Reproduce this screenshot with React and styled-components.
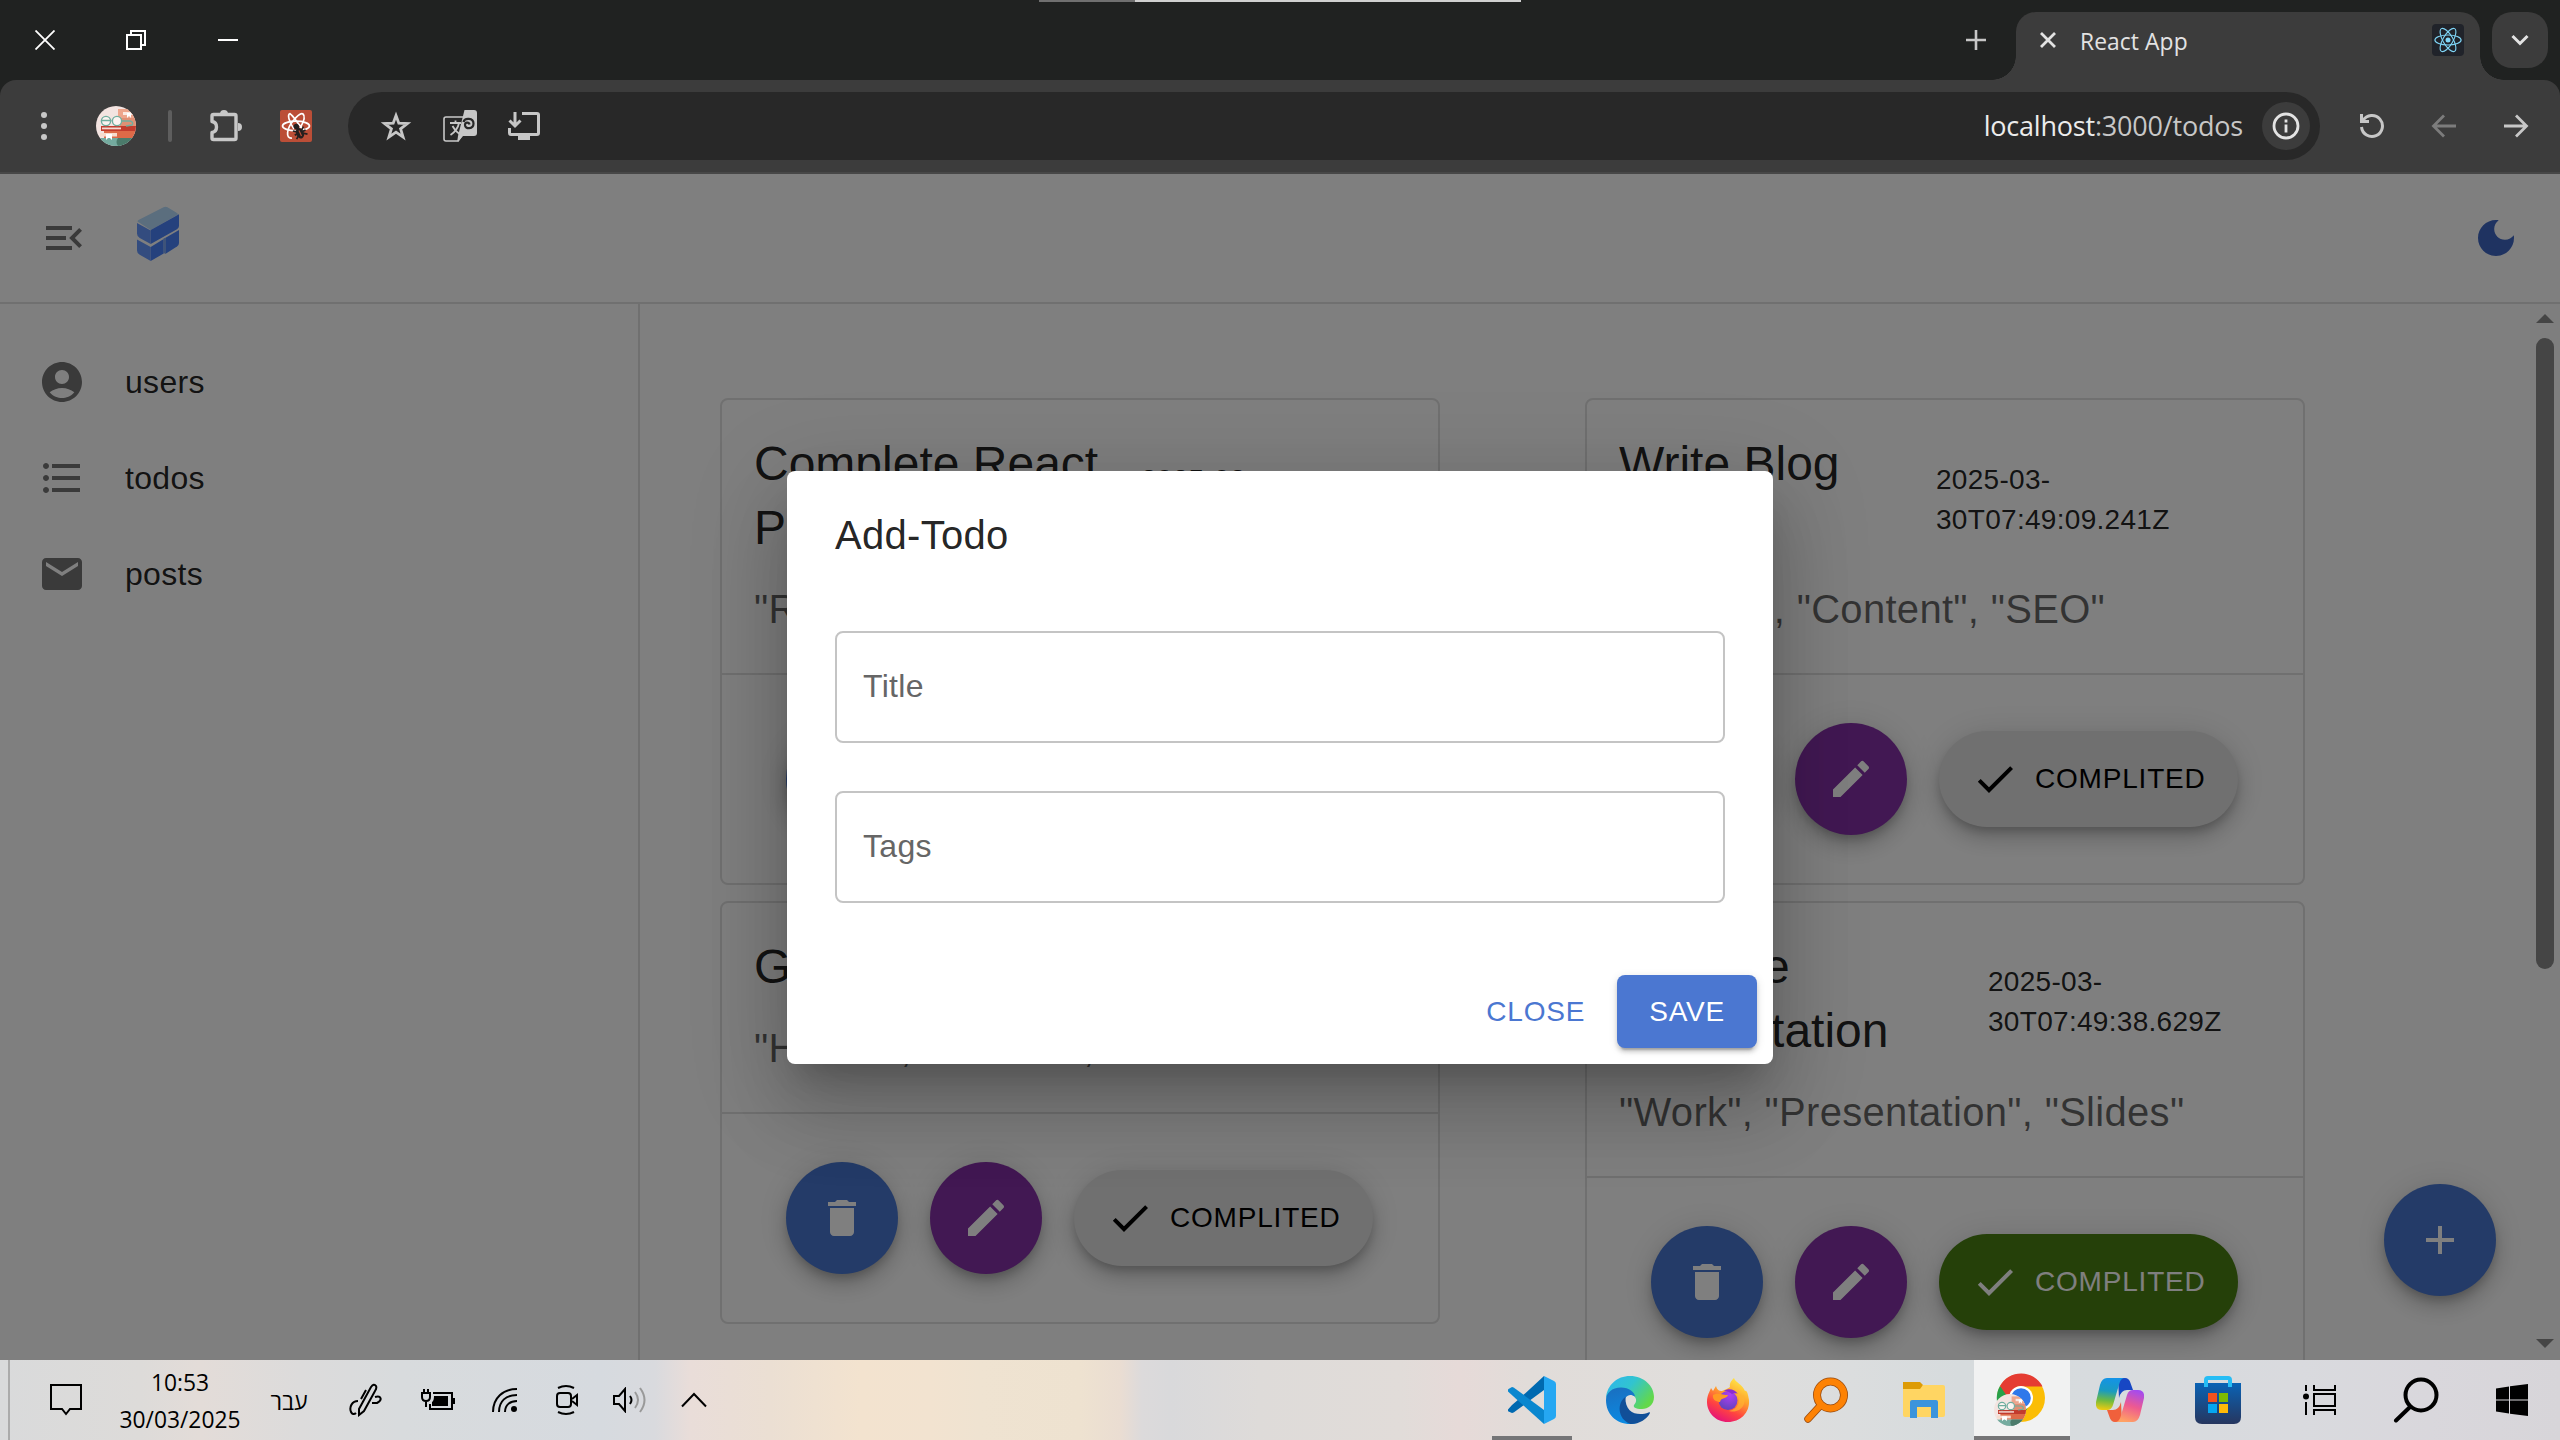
import React from "react";
import styled, { createGlobalStyle } from "styled-components";

const GlobalStyle = createGlobalStyle`
  * { box-sizing: border-box; }
  html, body { margin: 0; padding: 0; }
  body {
    width: 2560px;
    height: 1440px;
    overflow: hidden;
    font-family: "Liberation Sans", Arial, sans-serif;
    background: #202221;
  }
  svg { display: block; flex: none; }
`;

const ui = `"Open Sans", "Noto Sans", "DejaVu Sans", sans-serif`;

/* ---------- shell ---------- */
const Screen = styled.div`
  display: flex;
  flex-direction: column;
  width: 2560px;
  height: 1440px;
  position: relative;
`;

const Slot = styled.div`
  width: ${(p) => p.$w}px;
  height: 100%;
  flex: none;
  display: flex;
  align-items: center;
  justify-content: center;
  margin-left: ${(p) => p.$ml || 0}px;
`;

/* ---------- tab strip ---------- */
const TabStrip = styled.div`
  height: 80px;
  flex: none;
  display: flex;
  align-items: flex-start;
  background: #202221;
  color: #fff;
`;
const LoadLine = styled.div`
  position: absolute;
  top: 0;
  left: 1039px;
  width: 482px;
  height: 2px;
  background: linear-gradient(90deg, #707070 0 96px, #d0d0d0 96px);
`;
const Spacer = styled.div`
  flex: 1;
`;
const Tab = styled.div`
  position: relative;
  width: 464px;
  height: 68px;
  margin-top: 12px;
  padding: 0 16px 0 24px;
  display: flex;
  align-items: center;
  background: #3c3c3c;
  border-radius: 20px 20px 0 0;
  &::before,
  &::after {
    content: "";
    position: absolute;
    bottom: 0;
    width: 24px;
    height: 24px;
  }
  &::before {
    left: -24px;
    background: radial-gradient(circle at 0 0, transparent 23.5px, #3c3c3c 24px);
  }
  &::after {
    right: -24px;
    background: radial-gradient(circle at 100% 0, transparent 23.5px, #3c3c3c 24px);
  }
`;
const TabTitle = styled.span`
  flex: 1;
  margin-left: 24px;
  padding-bottom: 8px;
  font: 400 22.8px/32px ${ui};
  letter-spacing: 0.1px;
  color: #e3e3e3;
`;
const TabIcon = styled.div`
  margin-bottom: 12px;
`;
const TabMenu = styled.div`
  width: 56px;
  height: 56px;
  margin: 12px 12px 0 12px;
  border-radius: 20px;
  background: #3c3c3c;
  display: flex;
  align-items: center;
  justify-content: center;
`;

/* ---------- toolbar ---------- */
const Toolbar = styled.div`
  height: 94px;
  flex: none;
  display: flex;
  align-items: center;
  padding-right: 8px;
  background: #3c3c3c;
  border-bottom: 2px solid #474747;
  border-radius: 16px 16px 0 0;
`;
const Divider = styled.div`
  width: 4px;
  height: 32px;
  margin-left: 24px;
  border-radius: 2px;
  background: #5e5e5e;
`;
const Omnibox = styled.div`
  flex: 1;
  height: 68px;
  margin-left: 18px;
  padding: 0 10px 0 16px;
  display: flex;
  align-items: center;
  border-radius: 34px;
  background: #282828;
`;
const Url = styled.span`
  font: 400 27px/40px ${ui};
  letter-spacing: -0.2px;
  color: #c7c7c7;
  b {
    font-weight: 400;
    color: #ececec;
  }
`;
const InfoChip = styled.div`
  width: 48px;
  height: 48px;
  margin-left: 19px;
  border-radius: 50%;
  background: #3c3c3c;
  display: flex;
  align-items: center;
  justify-content: center;
`;

/* ---------- web page ---------- */
const Page = styled.div`
  position: relative;
  height: 1186px;
  flex: none;
  display: flex;
  flex-direction: column;
  overflow: hidden;
  background: #fff;
  color: rgba(0, 0, 0, 0.87);
`;
const Header = styled.header`
  height: 130px;
  flex: none;
  display: flex;
  align-items: center;
  padding: 0 40px;
  border-bottom: 2px solid #e0e0e0;
`;
const Logo = styled.svg`
  margin: 0 0 8px 48px;
`;
const Body = styled.div`
  flex: 1;
  min-height: 0;
  display: flex;
`;
const Sidebar = styled.nav`
  width: 640px;
  flex: none;
  padding-top: 30px;
  border-right: 2px solid #e0e0e0;
`;
const NavItem = styled.a`
  height: 96px;
  padding-left: 38px;
  display: flex;
  align-items: center;
  gap: 39px;
  font-size: 32px;
  letter-spacing: 0.3px;
  color: rgba(0, 0, 0, 0.87);
`;
const Main = styled.main`
  flex: 1;
  padding: 94px 0 0 80px;
  display: grid;
  grid-template-columns: 720px 720px;
  column-gap: 145px;
  row-gap: 16px;
  align-items: start;
  align-content: start;
`;
const Card = styled.article`
  border: 2px solid #e0e0e0;
  border-radius: 8px;
`;
const CardBody = styled.div`
  padding: 32px;
  border-bottom: 2px solid #e0e0e0;
`;
const CardHead = styled.div`
  display: grid;
  grid-template-columns: ${(p) => p.$titleWidth}px 1fr;
  align-items: start;
  margin-bottom: 16.8px;
`;
const CardTitle = styled.h5`
  margin: 0;
  font-weight: 400;
  font-size: 48px;
  line-height: 64px;
  white-space: pre-line;
`;
const CardDate = styled.p`
  margin: 27.5px 0 0;
  height: 0;
  font-size: 28px;
  line-height: 40px;
  letter-spacing: 0.3px;
  white-space: pre-line;
`;
const Tags = styled.h6`
  margin: 0;
  font-weight: 400;
  font-size: 40px;
  line-height: 64px;
  letter-spacing: 0.3px;
  color: rgba(0, 0, 0, 0.6);
`;
const CardActions = styled.div`
  padding: 48px 0 48px 64px;
  display: flex;
  align-items: center;
  gap: 32px;
`;
const fabShadow = `0 6px 10px -2px rgba(0,0,0,.2), 0 12px 20px 0 rgba(0,0,0,.14), 0 2px 36px 0 rgba(0,0,0,.12)`;
const Fab = styled.button`
  width: 112px;
  height: 112px;
  padding: 0;
  border: 0;
  border-radius: 50%;
  display: flex;
  align-items: center;
  justify-content: center;
  background: ${(p) => p.$bg};
  color: #fff;
  box-shadow: ${fabShadow};
`;
const AddFab = styled(Fab)`
  position: absolute;
  right: 64px;
  bottom: 64px;
`;
const Pill = styled.button`
  height: 96px;
  width: 299px;
  padding: 0 0 0 32px;
  border: 0;
  border-radius: 48px;
  display: flex;
  align-items: center;
  gap: 16px;
  font: 400 28px "Liberation Sans", Arial, sans-serif;
  letter-spacing: 0.8px;
  background: ${(p) => (p.$done ? "#4a8012" : "#e0e0e0")};
  color: ${(p) => (p.$done ? "#fff" : "#000")};
  box-shadow: ${fabShadow};
`;
const ScrollTrack = styled.div`
  width: 30px;
  flex: none;
  padding: 10px 0 12px;
  display: flex;
  flex-direction: column;
  align-items: center;
  background: #fdfdfd;
`;
const ScrollThumb = styled.div`
  width: 18px;
  height: 631px;
  margin: 15px 0 auto;
  border-radius: 9px;
  background: #8b8b8b;
`;

/* ---------- dialog ---------- */
const Backdrop = styled.div`
  position: absolute;
  inset: 0;
  display: flex;
  align-items: center;
  justify-content: center;
  background: rgba(0, 0, 0, 0.5);
`;
const Dialog = styled.section`
  width: 986px;
  height: 593px;
  margin-top: 1px;
  display: flex;
  flex-direction: column;
  border-radius: 8px;
  background: #fff;
  box-shadow: 0 22px 30px -14px rgba(0, 0, 0, 0.2), 0 48px 76px 6px rgba(0, 0, 0, 0.14),
    0 18px 92px 16px rgba(0, 0, 0, 0.12);
`;
const DialogTitle = styled.h2`
  margin: 0;
  padding: 32px 48px;
  font-weight: 400;
  font-size: 40px;
  line-height: 64px;
  letter-spacing: 0.3px;
`;
const Fields = styled.div`
  flex: 1;
  padding: 32px 48px;
  display: flex;
  flex-direction: column;
  gap: 48px;
`;
const Field = styled.label`
  height: 112px;
  padding: 0 0 2px 26px;
  display: flex;
  align-items: center;
  border: 2px solid #c4c4c4;
  border-radius: 8px;
  font-size: 32px;
  letter-spacing: 0.3px;
  color: #666;
`;
const DialogActions = styled.div`
  padding: 16px;
  display: flex;
  justify-content: flex-end;
  gap: 16px;
`;
const Button = styled.button`
  height: 73px;
  padding: 0 ${(p) => (p.$filled ? 32 : 16)}px;
  border: 0;
  border-radius: 8px;
  font: 400 28px "Liberation Sans", Arial, sans-serif;
  letter-spacing: 0.8px;
  background: ${(p) => (p.$filled ? "#4b77d1" : "transparent")};
  color: ${(p) => (p.$filled ? "#fff" : "#4b77d1")};
  box-shadow: ${(p) =>
    p.$filled
      ? "0 6px 2px -4px rgba(0,0,0,.2), 0 4px 4px 0 rgba(0,0,0,.14), 0 2px 10px 0 rgba(0,0,0,.12)"
      : "none"};
`;

/* ---------- taskbar ---------- */
const Taskbar = styled.footer`
  height: 80px;
  flex: none;
  display: flex;
  align-items: center;
  color: #000;
  background: linear-gradient(
    90deg,
    #d9dadb 0,
    #dddbd9 140px,
    #e3dcd8 200px,
    #dcdbdb 300px,
    #d8dbdd 400px,
    #d6dadf 600px,
    #d9dade 655px,
    #e9ddd9 690px,
    #ebdfd3 770px,
    #f3e3cf 860px,
    #f2e3d0 930px,
    #efe3d1 980px,
    #eee2d0 1080px,
    #eaddd2 1120px,
    #dcdadb 1142px,
    #d9d9db 1170px,
    #dedbd9 1260px,
    #e1dcd9 1400px,
    #e6dad8 1460px,
    #e1dcd9 1530px,
    #e0dedc 1700px,
    #dbddde 1850px,
    #d6dbdd 1960px,
    #d7dbde 2100px,
    #d9dade 2300px,
    #d9d7dc 2430px,
    #d7d5d9 2560px
  );
`;
const DesktopEdge = styled.div`
  width: 10px;
  height: 80px;
  flex: none;
  border-right: 2px solid #ababab;
`;
const Clock = styled.div`
  text-align: center;
  font: 400 22.8px/37px ${ui};
  padding-top: 1px;
`;
const Lang = styled.span`
  font: 400 23px/32px ${ui};
  padding: 1px 1px 0 0;
`;
const TaskApp = styled.div`
  position: relative;
  width: 96px;
  height: 80px;
  margin-right: ${(p) => p.$gap ?? 2}px;
  display: flex;
  align-items: center;
  justify-content: center;
  background: ${(p) => (p.$active ? "#f1f2f2" : "transparent")};
  &::after {
    content: "";
    display: ${(p) => (p.$running ? "block" : "none")};
    position: absolute;
    left: ${(p) => (p.$active ? 0 : 8)}px;
    right: ${(p) => (p.$active ? 0 : 8)}px;
    bottom: 0;
    height: 4px;
    background: #757577;
  }
`;

/* ---------- icons ---------- */
const Mui = ({ d, size = 48, color = "currentColor" }) => (
  <svg width={size} height={size} viewBox="0 0 24 24" fill={color}>
    <path d={d} />
  </svg>
);
const P = {
  menuOpen: "M3 18h13v-2H3zm0-5h10v-2H3zm0-7v2h13V6zm18 9.59L17.42 12 21 8.41 19.59 7l-5 5 5 5z",
  moon: "M12 3c-4.97 0-9 4.03-9 9s4.03 9 9 9 9-4.03 9-9c0-.46-.04-.92-.1-1.36-.98 1.37-2.58 2.26-4.4 2.26-2.98 0-5.4-2.42-5.4-5.4 0-1.81.89-3.42 2.26-4.4-.44-.06-.9-.1-1.36-.1",
  user: "M12 2C6.48 2 2 6.48 2 12s4.48 10 10 10 10-4.48 10-10S17.52 2 12 2m0 4c1.93 0 3.5 1.57 3.5 3.5S13.93 13 12 13s-3.5-1.57-3.5-3.5S10.07 6 12 6m0 14c-2.03 0-4.43-.82-6.14-2.88C7.55 15.8 9.68 15 12 15s4.45.8 6.14 2.12C16.43 19.18 14.03 20 12 20",
  list: "M4 10.5c-.83 0-1.5.67-1.5 1.5s.67 1.5 1.5 1.5 1.5-.67 1.5-1.5-.67-1.5-1.5-1.5m0-6c-.83 0-1.5.67-1.5 1.5S3.17 7.5 4 7.5 5.5 6.83 5.5 6 4.83 4.5 4 4.5m0 12c-.83 0-1.5.68-1.5 1.5s.68 1.5 1.5 1.5 1.5-.68 1.5-1.5-.67-1.5-1.5-1.5M7 19h14v-2H7zm0-6h14v-2H7zm0-8v2h14V5z",
  mail: "M20 4H4c-1.1 0-1.99.9-1.99 2L2 18c0 1.1.9 2 2 2h16c1.1 0 2-.9 2-2V6c0-1.1-.9-2-2-2m0 4-8 5-8-5V6l8 5 8-5z",
  trash: "M6 19c0 1.1.9 2 2 2h8c1.1 0 2-.9 2-2V7H6zM19 4h-3.5l-1-1h-5l-1 1H5v2h14z",
  edit: "M3 17.25V21h3.75L17.81 9.94l-3.75-3.75zM20.71 7.04c.39-.39.39-1.02 0-1.41l-2.34-2.34a.996.996 0 0 0-1.41 0l-1.83 1.83 3.75 3.75z",
  check: "M9 16.17 4.83 12l-1.42 1.41L9 19 21 7l-1.41-1.41z",
  add: "M19 13h-6v6h-2v-6H5v-2h6V5h2v6h6z",
};

const Line = ({ w, h = w, sw = 2, color = "#fff", children }) => (
  <svg width={w} height={h} viewBox={`0 0 ${w} ${h}`} fill="none" stroke={color} strokeWidth={sw}>
    {children}
  </svg>
);

const AvatarArt = ({ size }) => (
  <svg width={size} height={size} viewBox="0 0 40 40">
    <defs>
      <clipPath id={`av${size}`}>
        <circle cx="20" cy="20" r="20" />
      </clipPath>
    </defs>
    <g clipPath={`url(#av${size})`}>
      <rect width="40" height="40" fill="#f3e4e1" />
      <rect x="22" y="3" width="18" height="9" fill="#eda58c" />
      <rect x="27" y="6" width="13" height="3" fill="#fbe9e2" />
      <path d="M31 7h4v5l-2-2-2 2z" fill="#fff" />
      <rect x="24" y="12" width="16" height="9" fill="#e08f74" />
      <rect x="5" y="20" width="35" height="5" fill="#c23b2d" />
      <rect x="6" y="21.500" width="19" height="1.800" fill="#f3d9d2" />
      <rect x="8" y="25" width="32" height="7" fill="#dd6a48" />
      <rect x="4" y="27" width="17" height="3.500" fill="#f7dccd" />
      <path d="M10 28h6v7l-3-3-3 3z" fill="#fff" />
      <rect x="0" y="32" width="40" height="8" fill="#74ab9f" />
      <path d="M22 32h18v8H22q-3-4 0-8" fill="#4b7b6b" />
      <path d="M10 28h6v6l-3-3-3 3z" fill="#fff" />
      <g fill="#fbf3f0" stroke="#6fae9f" strokeWidth="1.400">
        <circle cx="10" cy="15" r="4.600" />
        <circle cx="21" cy="15" r="4.600" />
        <path d="M5.500 14.500h10M26 15h8q4 1 2 4l-6 1" fill="none" />
      </g>
    </g>
  </svg>
);

const Atom = ({ size, color, sw, r = 2 }) => (
  <svg width={size} height={size} viewBox="-12 -12 24 24" fill="none" stroke={color} strokeWidth={sw}>
    <circle r={r} fill={color} stroke="none" />
    <ellipse rx="10.500" ry="4" />
    <ellipse rx="10.500" ry="4" transform="rotate(60)" />
    <ellipse rx="10.500" ry="4" transform="rotate(120)" />
  </svg>
);
const Favicon = styled.div`
  width: 32px;
  height: 32px;
  margin-bottom: 12px;
  border-radius: 4px;
  background: #20232a;
  display: flex;
  align-items: center;
  justify-content: center;
`;

const ReactExt = () => (
  <svg width="32" height="32" viewBox="0 0 32 32">
    <rect width="32" height="32" rx="2" fill="#bb4e37" />
    <g fill="none" stroke="#fff" strokeWidth="1.700" transform="translate(16 16)">
      <ellipse rx="13.500" ry="4.800" />
      <path d="M-4 12C-11 13-9 2-3-5C1-10 5-13.500 7-12C10-9.500 7-3 4 2" />
      <path d="M6.500 3C1-1-3-10-7-12.300C-10-12-8-4-3 3" transform="translate(1 0)" />
    </g>
    <g fill="#241f1e" transform="rotate(-25 20 21)">
      <circle cx="18.500" cy="15.500" r="2.800" />
      <ellipse cx="19" cy="23" rx="3.800" ry="5.500" />
      <path d="M13.500 18l12 9M25 18.500L13.500 27M13.500 22.500h12" stroke="#241f1e" strokeWidth="1.700" />
    </g>
    <path d="M19 20.500l2.500 5.500" stroke="#bb4e37" strokeWidth="1.200" />
  </svg>
);

/* taskbar application icons */
const VsCode = () => (
  <svg width="48" height="48" viewBox="0 0 48 48">
    <path d="M36 0L11 23 4 29 0 33.500Q-.5 35 .5 35.500L4 37Q5 37 6 36.300L36 14z" fill="#0069b0" />
    <path d="M36 48L11 25.500 0 15.500Q-.5 14 .5 13L4 11Q5 11 6 11.700L36 34z" fill="#0a87cf" />
    <path d="M36 0l10 5q2 1 2 3v32q0 2-2 3l-10 5z" fill="#25a7f2" />
  </svg>
);
const Edge = () => (
  <svg width="48" height="48" viewBox="0 0 48 48">
    <defs>
      <linearGradient id="eg1" x1="0" y1="0" x2="1" y2=".6">
        <stop offset="0" stopColor="#2fb4ee" />
        <stop offset=".5" stopColor="#31c4d0" />
        <stop offset="1" stopColor="#63d84a" />
      </linearGradient>
      <linearGradient id="eg2" x1=".2" y1="0" x2=".4" y2="1">
        <stop offset="0" stopColor="#1a6fc0" />
        <stop offset="1" stopColor="#0b8ae2" />
      </linearGradient>
    </defs>
    <path d="M0 22C1 9 11 0 24 0c14 0 24 10 24 21 0 8-6 12-12 12-7 0-9-2-8-4 3-3 3-7-1-10C20 10 6 12 0 22z" fill="url(#eg1)" />
    <path d="M0 24C0 17 6 11.500 15 11.500c8 0 14 5 14 9-6-4-11 0-11 7 0 10 8 16 14 19-3 1-5 1.500-8 1.500C10 48 0 38 0 24z" fill="url(#eg2)" />
    <path d="M19.500 21C11 26 11 43 24.500 48 34 48 41 43 44 37c0-1-.5-1-1.500-.5-10 4-24 1-23-15.500z" fill="#114f98" />
  </svg>
);
const Firefox = () => (
  <svg width="44" height="48" viewBox="0 0 44 48">
    <defs>
      <linearGradient id="ff1" x1=".8" y1="0" x2=".3" y2="1">
        <stop offset="0" stopColor="#fff04a" />
        <stop offset=".4" stopColor="#ffa22c" />
        <stop offset=".7" stopColor="#ff4440" />
        <stop offset="1" stopColor="#e4107c" />
      </linearGradient>
      <radialGradient id="ff2" cx=".6" cy=".2" r=".9">
        <stop offset="0" stopColor="#b23ef5" />
        <stop offset="1" stopColor="#5a43b5" />
      </radialGradient>
    </defs>
    <path d="M28 2c1 4 9 7 11 13 2-1 3 3 4 9C44 37 34 46 22 46 9 46 1 36 1 26c0-7 3-11 4-14l2 3 3-5c1 4 3 5 6 5 4-2 7-3 8-4-1-4 2-7 4-9z" fill="url(#ff1)" />
    <circle cx="22" cy="24.500" r="9.500" fill="url(#ff2)" />
    <path d="M7 19c5-3 10 0 15 0-1 4-7 2-8 7-3 0-8-2-7-7z" fill="#ff9a24" />
    <path d="M18 15c4-3 11-2 14 3-2-1-5-1-6 0-2-2-5-3-8-3z" fill="#8c2bd0" />
    <path d="M30 17c6 6 3 16-7 18 12 3 19-8 14-17 0 2-1 3-1 3-2-3-4-4-6-4z" fill="#ffb432" opacity=".7" />
  </svg>
);
const OrangeSearch = () => (
  <svg width="44" height="48" viewBox="0 0 44 48" fill="none" strokeLinecap="round">
    <path d="M15.500 30.500L4 43" stroke="#9a4c10" strokeWidth="7.500" />
    <circle cx="26.500" cy="19" r="13.500" stroke="#9a4c10" strokeWidth="8" />
    <path d="M15.500 30.500L4 43" stroke="#fd8204" strokeWidth="5.800" />
    <circle cx="26.500" cy="19" r="13.500" stroke="#fd8204" strokeWidth="6.400" />
  </svg>
);
const Folder = () => (
  <svg width="42" height="36" viewBox="0 0 42 36">
    <path d="M0 0h17l3 3-2 5H0z" fill="#dd9b05" />
    <path d="M0 7h17l3-4h20q2 0 2 2v28q0 2-2 2H2q-2 0-2-2z" fill="#ffd562" />
    <path d="M7 36V20q0-2 2-2h24q2 0 2 2v16h-7V25H14v11z" fill="#3b94dc" />
  </svg>
);
const Chrome = () => (
  <svg width="56" height="56" viewBox="0 0 56 56">
    <g transform="translate(27 26)">
      <circle r="24" fill="#fbbd05" />
      <path d="M0 0L-21-12A24 24 0 0 0-2 24L9 6z" fill="#27a049" />
      <path d="M-21-12A24 24 0 0 1 21.500-11.500H-4L-10 4z" fill="#e53c32" />
      <circle r="12" fill="#fff" />
      <circle r="9.800" fill="#2f78ea" />
    </g>
    <g transform="translate(0 22)">
      <AvatarArt size={32} />
    </g>
  </svg>
);
const Copilot = () => (
  <svg width="48" height="44" viewBox="0 0 48 44">
    <defs>
      <linearGradient id="cp1" x1=".4" y1="0" x2=".3" y2="1">
        <stop offset="0" stopColor="#1493e6" />
        <stop offset=".4" stopColor="#1a9bc0" />
        <stop offset=".7" stopColor="#6fba40" />
        <stop offset="1" stopColor="#f0cb10" />
      </linearGradient>
      <linearGradient id="cp2" x1=".7" y1="0" x2=".4" y2="1">
        <stop offset="0" stopColor="#a44bef" />
        <stop offset=".5" stopColor="#ee5a90" />
        <stop offset="1" stopColor="#ffa263" />
      </linearGradient>
    </defs>
    <path d="M22 0h7q4 0 5.500 5L37 12h-6q-6 0-8 8z" fill="#1747c4" />
    <path d="M26 44h-7q-4 0-5.500-5L11 32h6q6 0 8-8z" fill="#f0603c" />
    <path d="M11 0h18q-4 0-5.500 5L17 27q-1.500 5-6 5H6q-7 0-6-8L4 7Q6 0 11 0z" fill="url(#cp1)" />
    <path d="M37 44H19q4 0 5.500-5L31 17q1.500-5 6-5h5q7 0 6 8l-4 17q-2 7-7 7z" fill="url(#cp2)" />
  </svg>
);
const Store = () => (
  <svg width="46" height="48" viewBox="0 0 46 48">
    <defs>
      <linearGradient id="st" x1="0" y1="0" x2="0" y2="1">
        <stop offset="0" stopColor="#0a63b5" />
        <stop offset="1" stopColor="#26365f" />
      </linearGradient>
    </defs>
    <path d="M0 7h46v34q0 7-7 7H7q-7 0-7-7z" fill="url(#st)" />
    <path d="M11 11V4q0-2 2-2h20q2 0 2 2v7" fill="none" stroke="#26bdf5" strokeWidth="4" />
    <path d="M13 17h9v9h-9z" fill="#f4511e" />
    <path d="M24 17h9v9h-9z" fill="#7fba00" />
    <path d="M13 28h9v9h-9z" fill="#05a6f0" />
    <path d="M24 28h9v9h-9z" fill="#ffba08" />
  </svg>
);

const cards = [
  { title: "Complete React\nProject", date: "2025-03-\n30T07:48:52.117Z", tags: '"React", "Project", "Code"', w: 387 },
  { title: "Write Blog\nPost", date: "2025-03-\n30T07:49:09.241Z", tags: '"Writing", "Content", "SEO"', w: 317 },
  { title: "Gym", date: "", tags: '"Health", "Fitness", "Life"', w: 388 },
  { title: "Prepare\nPresentation", date: "2025-03-\n30T07:49:38.629Z", tags: '"Work", "Presentation", "Slides"', w: 369, done: true },
];

const TodoCard = ({ title, date, tags, w, done }) => (
  <Card>
    <CardBody>
      <CardHead $titleWidth={w}>
        <CardTitle>{title}</CardTitle>
        <CardDate>{date}</CardDate>
      </CardHead>
      <Tags>{tags}</Tags>
    </CardBody>
    <CardActions>
      <Fab $bg="#4876d0"><Mui d={P.trash} /></Fab>
      <Fab $bg="#8430a6"><Mui d={P.edit} /></Fab>
      <Pill $done={done}><Mui d={P.check} />COMPLITED</Pill>
    </CardActions>
  </Card>
);

const grey = "rgba(0,0,0,.54)";

export default function App() {
  return (
    <Screen>
      <GlobalStyle />
      <TabStrip>
        <Slot $w={89}><Line w={20} sw={1.8}><path d="M.5.5l19 19M19.500.5l-19 19" /></Line></Slot>
        <Slot $w={93}><Line w={20}><path d="M1 5h14v14H1zM5 5V1h14v14h-4" /></Line></Slot>
        <Slot $w={92}><Line w={20}><path d="M0 10h20" /></Line></Slot>
        <Spacer />
        <Slot $w={80}><Line w={20} sw={2.6} color="#c7c7c7"><path d="M10 0v20M0 10h20" /></Line></Slot>
        <Tab>
          <TabIcon><Line w={16} sw={2.8} color="#e3e3e3"><path d="M1 1l14 14M15 1L1 15" /></Line></TabIcon>
          <TabTitle>React App</TabTitle>
          <Favicon><Atom size={30} color="#7fd6f7" sw={0.9} /></Favicon>
        </Tab>
        <TabMenu><Line w={18} h={12} sw={3} color="#e3e3e3"><path d="M1.500 2L9 9.500 16.500 2" /></Line></TabMenu>
      </TabStrip>
      <LoadLine />

      <Toolbar>
        <Slot $w={88}>
          <svg width="6" height="28" viewBox="0 0 6 28" fill="#c7c7c7">
            <circle cx="3" cy="3" r="3" /><circle cx="3" cy="14" r="3" /><circle cx="3" cy="25" r="3" />
          </svg>
        </Slot>
        <Slot $w={56}><AvatarArt size={40} /></Slot>
        <Divider />
        <Slot $w={72} $ml={18}>
          <svg width="32" height="34" viewBox="0 0 32 34">
            <path d="M10 5a4 4 0 0 1 8 0zM28 14a4 4 0 0 1 0 8z" fill="#c7c7c7" />
            <path d="M3.500 5.500h21q1.500 0 1.500 1.500v22q0 1.500-1.500 1.500h-21Q2 30.500 2 29v-5.500c6-1 6-10 0-11V7q0-1.500 1.500-1.500z" fill="none" stroke="#c7c7c7" strokeWidth="3.400" strokeLinejoin="round" />
          </svg>
        </Slot>
        <Slot $w={68}><ReactExt /></Slot>
        <Omnibox>
          <Slot $w={64}>
            <Line w={32} h={32} sw={2.8} color="#c7c7c7">
              <path d="M16 5.500l2.800 7.700 8.600.3-6.800 5.300 2.500 8.300-7.100-4.900-7.100 4.900 2.500-8.300-6.800-5.300 8.600-.3z" />
            </Line>
          </Slot>
          <Slot $w={64}>
            <svg width="34" height="34" viewBox="0 0 34 34">
              <path d="M21 8H3Q1 8 1 10v20q0 2 2 2h12l4-6" fill="none" stroke="#c7c7c7" strokeWidth="1.600" />
              <path d="M7 14h11M12.500 11.500V14M16 14c-1 5-4 9-8.500 12M9.500 17c2 4 4 6 7 8" fill="none" stroke="#c7c7c7" strokeWidth="1.800" />
              <path d="M21.500 1H31q3 0 3 3v20q0 3-3 3H20l-5 6q-1-2 0-6z" fill="#c7c7c7" />
              <path d="M20.500 13c1-4.500 10-4.500 10 1.500 0 6-8.500 6-8.500 1.500 0-3 4-3 4.500-.5" fill="none" stroke="#282828" strokeWidth="2.200" />
            </svg>
          </Slot>
          <Slot $w={64}>
            <Line w={32} h={28} sw={3} color="#c7c7c7">
              <path d="M14 1.500h15q1.500 0 1.500 1.500v18q0 1.500-1.500 1.500H3Q1.500 22.500 1.500 21v-5M7 0v14M1.500 8.500L7 14l5.500-5.500" />
              <path d="M10 26h12" strokeWidth="4" />
            </Line>
          </Slot>
          <Spacer />
          <Url><b>localhost</b>:3000/todos</Url>
          <InfoChip>
            <Line w={28} sw={2.8} color="#e3e3e3">
              <circle cx="14" cy="14" r="12" />
              <path d="M14 12.500v8M14 7.500v3" />
            </Line>
          </InfoChip>
        </Omnibox>
        <Slot $w={72} $ml={16}>
          <Line w={26} sw={3} color="#c7c7c7"><path d="M4 7.500A10.500 10.500 0 1 1 2.500 14M2.500 1v7.500H10" /></Line>
        </Slot>
        <Slot $w={72}>
          <Line w={26} sw={2.8} color="#7c7c7c"><path d="M25 13H2.500M13 2.500L2.500 13 13 23.500" /></Line>
        </Slot>
        <Slot $w={72}>
          <Line w={26} sw={2.8} color="#c7c7c7"><path d="M1 13h22.500M13 2.500L23.500 13 13 23.500" /></Line>
        </Slot>
      </Toolbar>

      <Page>
        <Header>
          <Mui d={P.menuOpen} color={grey} />
          <Logo width="44" height="56" viewBox="136 206 44 56">
            <path d="M137.500 221.500q0-1 1-1.500L163.500 207.300q2-1.200 4 0l9.500 5.700q1 .6 1 1.500L150.700 230z" fill="#b6dcfc" />
            <path d="M137 223l13.700 7.500V244l-11-6q-2.700-1.500-2.700-4.500z" fill="#69f" />
            <path d="M150.700 230L179 214.300V226q0 2-2 3.200L150.700 244z" fill="#4a82fb" />
            <path d="M137 239.500l13.700 7.500v14l-11-6.200q-2.700-1.500-2.700-4.300z" fill="#69f" />
            <path d="M150.700 247L163.700 239v14.500L150.700 261z" fill="#4a82fb" />
            <path d="M163.500 238.500l2.500-1v16.500l-2.500-1z" fill="#7ca6f2" />
            <path d="M166 237.500L179 230v13q0 2-2 3.500L166 253.500z" fill="#4a82fb" />
          </Logo>
          <Spacer />
          <Mui d={P.moon} color="#3e66c2" />
        </Header>
        <Body>
          <Sidebar>
            <NavItem><Mui d={P.user} color={grey} />users</NavItem>
            <NavItem><Mui d={P.list} color={grey} />todos</NavItem>
            <NavItem><Mui d={P.mail} color={grey} />posts</NavItem>
          </Sidebar>
          <Main>
            {cards.map((c) => <TodoCard key={c.title} {...c} />)}
          </Main>
          <ScrollTrack>
            <svg width="18" height="9" viewBox="0 0 18 9"><path d="M9 0l9 9H0z" fill="#8b8b8b" /></svg>
            <ScrollThumb />
            <svg width="18" height="9" viewBox="0 0 18 9"><path d="M9 9L0 0h18z" fill="#8b8b8b" /></svg>
          </ScrollTrack>
        </Body>
        <AddFab $bg="#4876d0"><Mui d={P.add} /></AddFab>
        <Backdrop>
          <Dialog>
            <DialogTitle>Add-Todo</DialogTitle>
            <Fields>
              <Field>Title</Field>
              <Field>Tags</Field>
            </Fields>
            <DialogActions>
              <Button>CLOSE</Button>
              <Button $filled>SAVE</Button>
            </DialogActions>
          </Dialog>
        </Backdrop>
      </Page>

      <Taskbar>
        <DesktopEdge />
        <Slot $w={92} $ml={10}>
          <Line w={32} h={32} color="#000" sw={2}><path d="M1 1h30v24H20l-4 5-4-5H1z" /></Line>
        </Slot>
        <Slot $w={136}><Clock>10:53<br />30/03/2025</Clock></Slot>
        <Slot $w={83}><Lang>עבר</Lang></Slot>
        <Slot $w={70}>
          <Line w={34} h={34} color="#000" sw={2}>
            <path d="M10 26L22 4q3-4 5-1 1 2-1 5L15 28l-5 4zM17 7l-5 9M9 18c-6 0-9 6-7 11 1 2 3 3 5 1M26 14c6-2 8 3 2 6h-5" />
          </Line>
        </Slot>
        <Slot $w={74}>
          <Line w={34} h={26} color="#000" sw={2}>
            <path d="M12 6h19v16H9v-5" />
            <path d="M13 9h14v10H11v-4q2-1 2-6z" fill="#000" stroke="none" />
            <path d="M33 11v6M3 2v4M7 2v4M1 6h8v4q0 4-4 4t-4-4zM5 14v6" />
          </Line>
        </Slot>
        <Slot $w={60}>
          <Line w={26} h={26} color="#000" sw={2}>
            <path d="M1 25C1 11 11 2 25 2M7 25C7 14 14 8 25 8M13 25c0-7 5-11 12-11" />
            <circle cx="22" cy="22" r="3" fill="#000" stroke="none" />
          </Line>
        </Slot>
        <Slot $w={64}>
          <Line w={24} h={32} color="#000" sw={2}>
            <rect x="2" y="9" width="14" height="14" rx="3" />
            <path d="M17 15l5-4v10l-5-4M3 4q8-4 16 0M3 28q8 4 16 0" />
          </Line>
        </Slot>
        <Slot $w={62}>
          <Line w={34} h={26} color="#000" sw={2}>
            <path d="M1 9h5l6-7v22l-6-7H1z" />
            <path d="M17 9q3 4 0 8" />
            <path d="M22 5q6 8 0 16M27 1q9 12 0 24" stroke="#999" />
          </Line>
        </Slot>
        <Slot $w={66}>
          <Line w={26} h={16} color="#000" sw={2}><path d="M1 14.500L13 2l12 12.500" /></Line>
        </Slot>
        <Spacer />
        <TaskApp $running><VsCode /></TaskApp>
        <TaskApp><Edge /></TaskApp>
        <TaskApp><Firefox /></TaskApp>
        <TaskApp><OrangeSearch /></TaskApp>
        <TaskApp><Folder /></TaskApp>
        <TaskApp $active $running><Chrome /></TaskApp>
        <TaskApp><Copilot /></TaskApp>
        <TaskApp $gap={6}><Store /></TaskApp>
        <TaskApp $gap={0}>
          <Line w={34} h={32} color="#000" sw={2}>
            <path d="M3 1v6M3 18v13" /><circle cx="3" cy="12.500" r="3" fill="#000" stroke="none" />
            <path d="M11 1v5h21V1M11 10h21v12H11zM11 31v-5h21v5" />
          </Line>
        </TaskApp>
        <TaskApp $gap={0}>
          <Line w={46} h={46} color="#000" sw={4}>
            <circle cx="28" cy="18" r="15.500" /><path d="M17 30L3 43.500" strokeLinecap="round" />
          </Line>
        </TaskApp>
        <TaskApp $gap={0}>
          <svg width="32" height="32" viewBox="0 0 32 32">
            <path d="M0 4.500l13-2V15.500H0zM14 2.300L32 0v15.500H14zM0 16.500h13v13l-13-2zM14 16.500h18V32l-18-2.300z" />
          </svg>
        </TaskApp>
      </Taskbar>
    </Screen>
  );
}
